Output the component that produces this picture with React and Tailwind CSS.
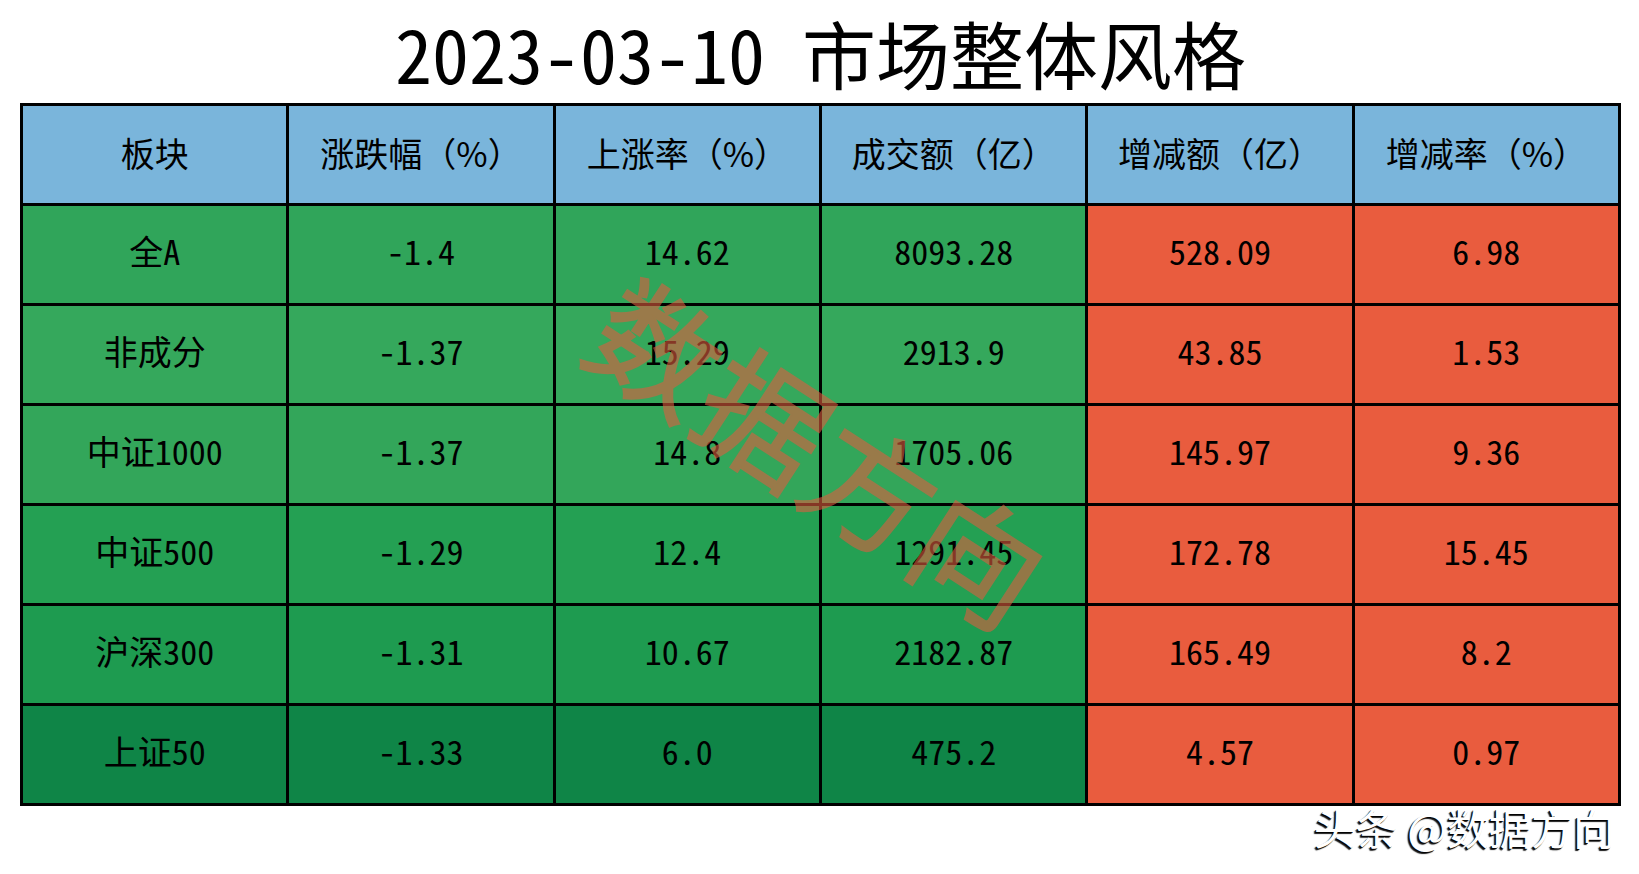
import React from "react";

const headers = ["板块", "涨跌幅（%）", "上涨率（%）", "成交额（亿）", "增减额（亿）", "增减率（%）"];

// 每行的绿色深浅不同，后两列为橙红色
const rows = [
    { name: "全A", vals: ["-1.4", "14.62", "8093.28", "528.09", "6.98"], green: "bg-[#30a55a]" },
    { name: "非成分", vals: ["-1.37", "15.29", "2913.9", "43.85", "1.53"], green: "bg-[#35a85c]" },
    { name: "中证1000", vals: ["-1.37", "14.8", "1705.06", "145.97", "9.36"], green: "bg-[#33a65a]" },
    { name: "中证500", vals: ["-1.29", "12.4", "1291.45", "172.78", "15.45"], green: "bg-[#24a053]" },
    { name: "沪深300", vals: ["-1.31", "10.67", "2182.87", "165.49", "8.2"], green: "bg-[#1e9b50]" },
    { name: "上证50", vals: ["-1.33", "6.0", "475.2", "4.57", "0.97"], green: "bg-[#0f8547]" },
];

const cjk = "font-['Noto_Sans_CJK_SC',sans-serif]";
const half = "[font-feature-settings:'hwid']";

const App = () => {
    return (
        <div className={`w-[1639px] h-[874px] bg-white text-black ${cjk}`}>
            <h1 className={`h-[103px] flex items-center justify-center text-[74px] leading-[80px] font-normal pl-[2px] ${half}`}>
                2023-03-10 市场整体风格
            </h1>

            <div className="relative ml-[20px] w-[1601px]">
                <div className="grid grid-cols-6 gap-[3px] bg-black p-[3px]">
                    {headers.map((h) => (
                        <div key={h} className="h-[97px] bg-[#7ab5db] flex items-center justify-center text-[34px] pb-[4px]">
                            {h}
                        </div>
                    ))}
                    {rows.map((row) => (
                        <React.Fragment key={row.name}>
                            <div className={`h-[97px] ${row.green} flex items-center justify-center text-[34px] pb-[8px] ${half}`}>
                                {row.name}
                            </div>
                            {row.vals.map((v, i) => (
                                <div
                                    key={i}
                                    className={`h-[97px] flex items-center justify-center text-[34px] pb-[8px] ${half} ${
                                        i >= 3 ? "bg-[#e95c3e]" : row.green
                                    }`}
                                >
                                    {v}
                                </div>
                            ))}
                        </React.Fragment>
                    ))}
                </div>

                {/* 水印 */}
                <div className="pointer-events-none absolute left-[802px] top-[346px] -translate-x-1/2 -translate-y-1/2 rotate-[33deg] text-[126px] leading-none tracking-[2px] text-[#de5d3f] [-webkit-text-stroke:2px_#de5d3f] opacity-60 whitespace-nowrap">
                    数据方向
                </div>
            </div>

            <div className="flex justify-end pr-[24px]">
                <span className="text-[42px] leading-none text-white [text-shadow:-2px_2px_1px_rgba(0,0,0,0.9),-1px_1px_0_rgba(0,0,0,0.9)]">
                    头条 @数据方向
                </span>
            </div>
        </div>
    );
};

export default App;
